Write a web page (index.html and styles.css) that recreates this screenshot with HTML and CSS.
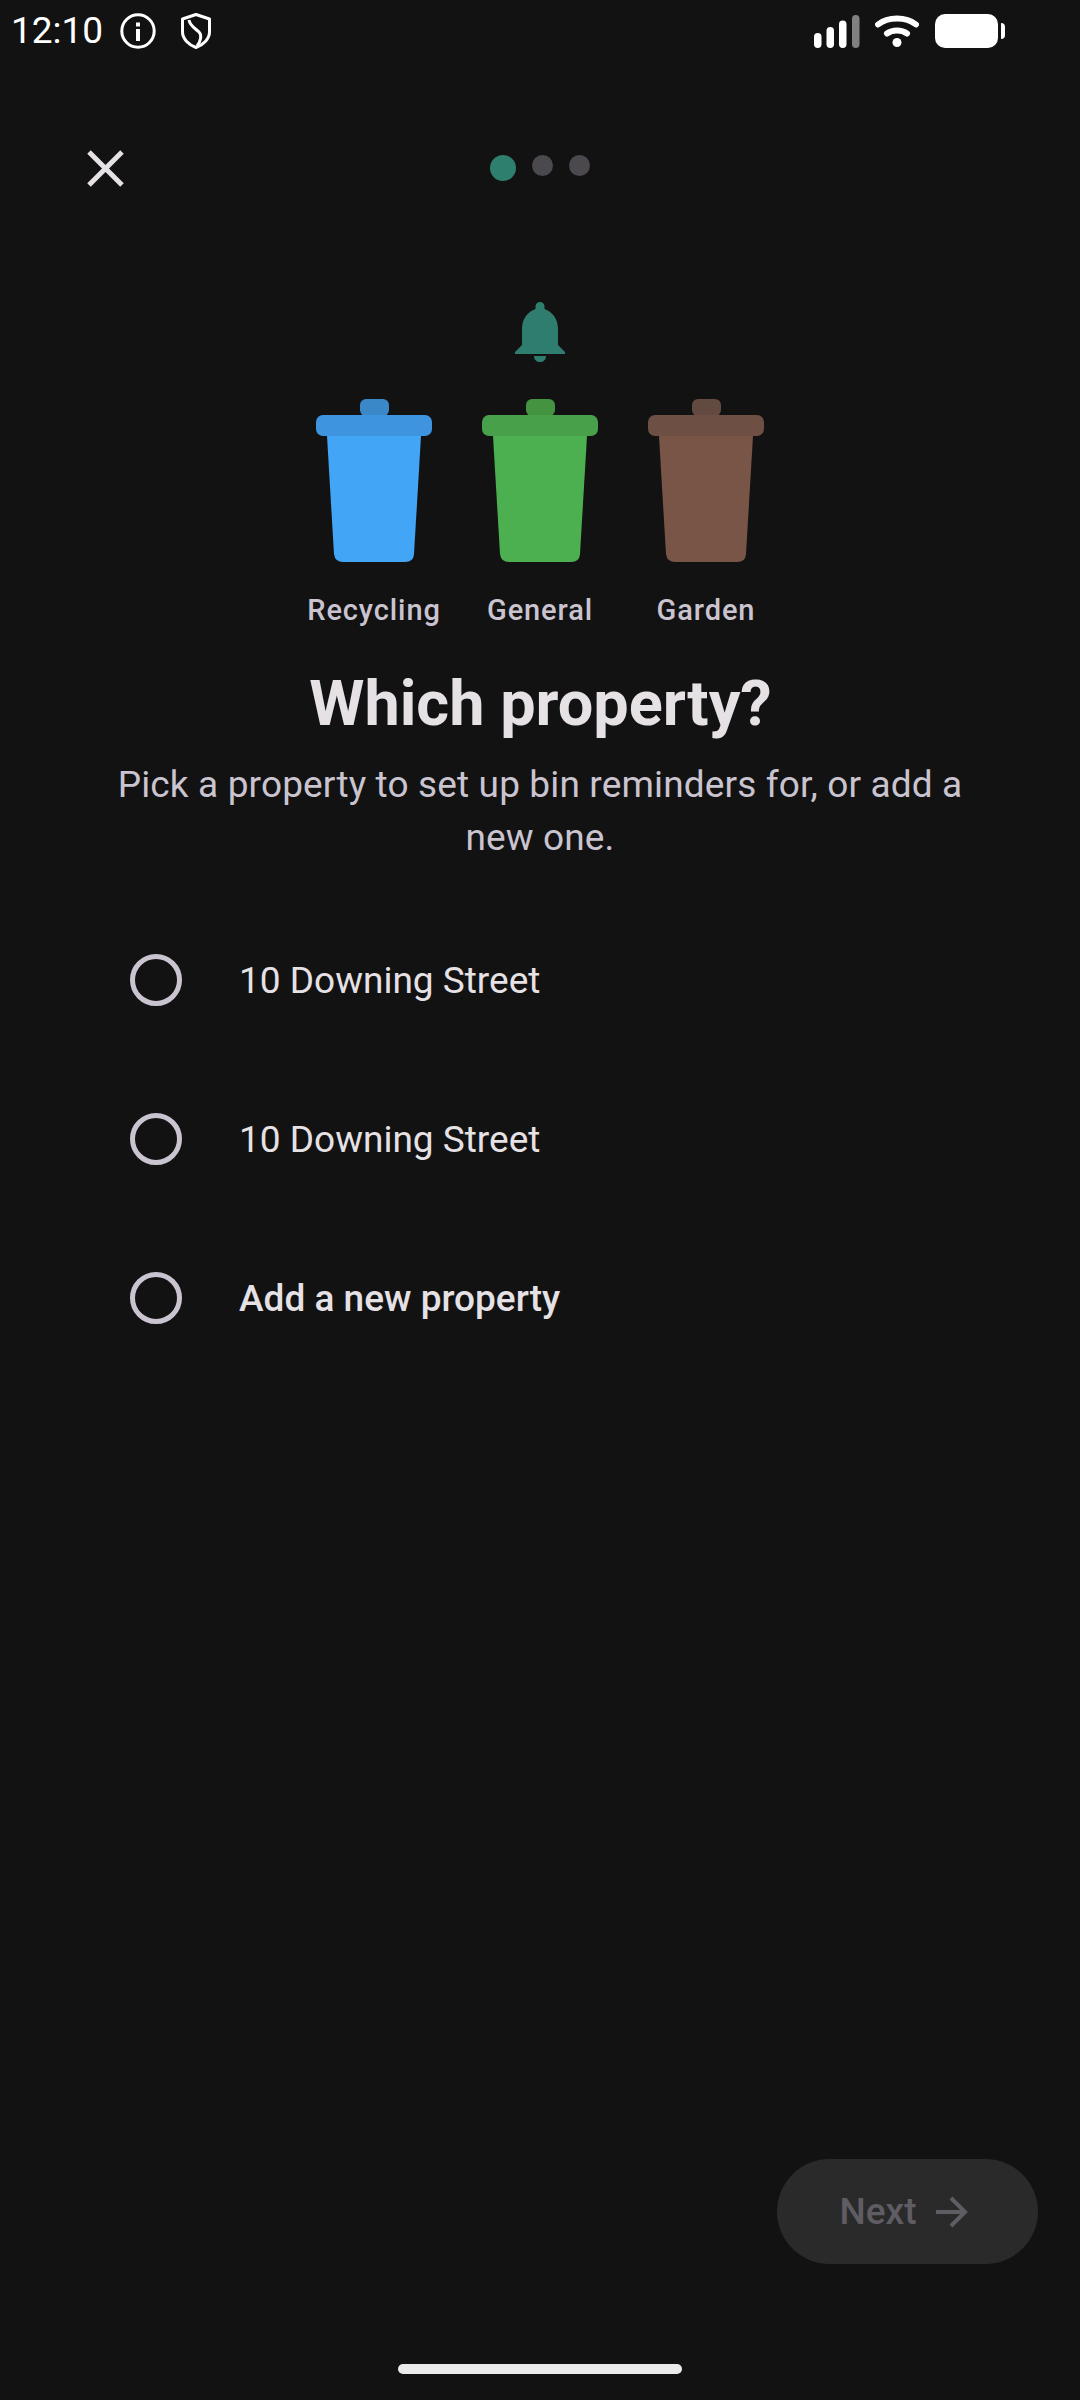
FILE: index.html
```html
<!DOCTYPE html>
<html lang="en">
<head>
    <meta charset="UTF-8">
    <meta name="viewport" content="width=device-width, initial-scale=1.0">
    <title>Which property?</title>
    <link rel="stylesheet" href="styles.css">
</head>
<body>

    <div class="status-bar">
        <span class="time">12:10</span>
        <svg class="icon-info" width="36" height="36" viewBox="0 0 36 36">
            <circle cx="18" cy="18" r="16.2" fill="none" stroke="#fff" stroke-width="3"/>
            <rect x="16" y="16" width="4" height="12" fill="#fff"/>
            <rect x="16" y="9.5" width="4" height="4" fill="#fff"/>
        </svg>
        <svg class="icon-shield" width="30" height="36" viewBox="0 0 30 36">
            <path d="M15 1.5L28.5 6V19C28.5 26 22 32 15 34.5C8 32 1.5 26 1.5 19V6Z" fill="none" stroke="#fff" stroke-width="3" stroke-linejoin="round"/>
            <path d="M8 7C9 13 14 15 18 19C21 22 20 28 16 33" fill="none" stroke="#fff" stroke-width="3"/>
        </svg>
        <div class="status-right">
            <svg width="46" height="33" viewBox="0 0 46 33">
                <rect x="0" y="18" width="7.5" height="15" rx="3.7" fill="#fff"/>
                <rect x="12.5" y="12" width="7.5" height="21" rx="3.7" fill="#fff"/>
                <rect x="25" y="5.500" width="7.5" height="27.5" rx="3.7" fill="#fff"/>
                <rect x="38" y="0" width="7.5" height="33" rx="3.7" fill="#808080"/>
            </svg>
            <svg class="icon-wifi" width="44" height="34" viewBox="0 0 44 34">
                <path d="M3 10.500C13 2.500 31 2.500 41 10.500" fill="none" stroke="#fff" stroke-width="6" stroke-linecap="round"/>
                <path d="M12 19.500C17.500 15.500 26.500 15.500 32 19.500" fill="none" stroke="#fff" stroke-width="6" stroke-linecap="round"/>
                <circle cx="22" cy="28.500" r="4.500" fill="#fff"/>
            </svg>
            <div class="battery"></div>
            <div class="battery-nub"></div>
        </div>
    </div>

    <div class="top-bar">
        <svg class="icon-close" width="37" height="37" viewBox="0 0 37 37">
            <path d="M2 2L35 35M35 2L2 35" fill="none" stroke="#e6e1e5" stroke-width="5"/>
        </svg>
        <div class="dots">
            <div class="dot active"></div>
            <div class="dot"></div>
            <div class="dot"></div>
        </div>
    </div>

    <svg class="bell" width="50" height="60" viewBox="0 0 50 60">
        <path d="M20.500 7V4.500a4.500 4.500 0 0 1 9 0V7C37 9.500 43 16.500 43 27V43L50 50V52H0V50L7 43V27C7 16.500 13 9.500 20.500 7Z" fill="#2e7d6e"/>
        <path d="M19 54H31C31 58 28 60 25 60C22 60 19 58 19 54Z" fill="#2e7d6e"/>
    </svg>

    <div class="bins">
        <div class="bin-item bin-blue">
            <svg class="bin" width="116" height="164" viewBox="0 0 116 164">
                <rect class="bin-handle" x="44" y="0" width="29" height="17" rx="6"/>
                <rect class="bin-lid" x="0" y="16" width="116" height="21" rx="7"/>
                <path class="bin-body" d="M11 37H105L98 155Q97.500 163 89 163H27Q19 163 18 155Z"/>
            </svg>
            <span class="bin-label">Recycling</span>
        </div>
        <div class="bin-item bin-green">
            <svg class="bin" width="116" height="164" viewBox="0 0 116 164">
                <rect class="bin-handle" x="44" y="0" width="29" height="17" rx="6"/>
                <rect class="bin-lid" x="0" y="16" width="116" height="21" rx="7"/>
                <path class="bin-body" d="M11 37H105L98 155Q97.500 163 89 163H27Q19 163 18 155Z"/>
            </svg>
            <span class="bin-label">General</span>
        </div>
        <div class="bin-item bin-brown">
            <svg class="bin" width="116" height="164" viewBox="0 0 116 164">
                <rect class="bin-handle" x="44" y="0" width="29" height="17" rx="6"/>
                <rect class="bin-lid" x="0" y="16" width="116" height="21" rx="7"/>
                <path class="bin-body" d="M11 37H105L98 155Q97.500 163 89 163H27Q19 163 18 155Z"/>
            </svg>
            <span class="bin-label">Garden</span>
        </div>
    </div>

    <h1>Which property?</h1>
    <p class="subtitle">Pick a property to set up bin reminders for, or add a new one.</p>

    <div class="options">
        <div class="option">
            <div class="radio"></div>
            <span>10 Downing Street</span>
        </div>
        <div class="option">
            <div class="radio"></div>
            <span>10 Downing Street</span>
        </div>
        <div class="option add-new">
            <div class="radio"></div>
            <span>Add a new property</span>
        </div>
    </div>

    <div class="footer">
        <button class="next-button" disabled>
            Next
            <svg width="32" height="32" viewBox="0 0 32 32">
                <path d="M0 16H29M15 2L29 16L15 30" fill="none" stroke="#5f5c63" stroke-width="4"/>
            </svg>
        </button>
    </div>

    <div class="home-bar"></div>

</body>
</html>
```

FILE: styles.css
```css
* {
    box-sizing: border-box;
}

body {
    margin: 0;
    width: 1080px;
    height: 2400px;
    overflow: hidden;
    display: flex;
    flex-direction: column;
    background-color: #121212;
    font-family: Roboto, sans-serif;
    color: #e6e1e5;
}

.status-bar {
    display: flex;
    align-items: center;
    height: 60px;
    padding: 2px 75px 0 11px;
    color: #fff;
}

.time {
    font-size: 37px;
    font-weight: 400;
    line-height: 60px;
}

.icon-info {
    margin-left: 17px;
}

.icon-shield {
    margin-left: 25px;
}

.status-right {
    display: flex;
    align-items: center;
    margin-left: auto;
}

.icon-wifi {
    margin-left: 15px;
}

.battery {
    width: 63px;
    height: 34px;
    margin-left: 16px;
    background-color: #fff;
    border-radius: 10px;
}

.battery-nub {
    width: 4px;
    height: 16px;
    margin-left: 3px;
    background-color: #fff;
    border-radius: 0 4px 4px 0;
}

.top-bar {
    display: flex;
    align-items: center;
    height: 60px;
    margin-top: 78px;
    padding-left: 87px;
}

.dots {
    display: flex;
    align-items: center;
    gap: 16px;
    margin-left: 366px;
}

.dot {
    width: 21px;
    height: 21px;
    margin-top: -6px;
    background-color: #4b494e;
    border-radius: 50%;
}

.dot.active {
    width: 26px;
    height: 26px;
    margin-top: 0;
    background-color: #2f7f6f;
}

.bell {
    display: block;
    align-self: center;
    margin-top: 104px;
}

.bins {
    display: flex;
    justify-content: center;
    gap: 50px;
    margin-top: 37px;
}

.bin-item {
    display: flex;
    flex-direction: column;
    align-items: center;
    width: 116px;
}

.bin {
    display: block;
}

.bin-label {
    margin-top: 30px;
    font-size: 29px;
    font-weight: 500;
    line-height: 34px;
    letter-spacing: 0.9px;
    white-space: nowrap;
    color: #cac4d0;
}

.bin-blue .bin-body { fill: #42a5f5; }
.bin-blue .bin-lid { fill: #3f94df; }
.bin-blue .bin-handle { fill: #3b88c9; }

.bin-green .bin-body { fill: #4caf50; }
.bin-green .bin-lid { fill: #48a04b; }
.bin-green .bin-handle { fill: #439341; }

.bin-brown .bin-body { fill: #795548; }
.bin-brown .bin-lid { fill: #6d4f44; }
.bin-brown .bin-handle { fill: #634a40; }

h1 {
    margin: 39px 0 0;
    padding-left: 1px;
    font-size: 63px;
    font-weight: 700;
    line-height: 76px;
    text-align: center;
}

.subtitle {
    width: 880px;
    margin: 16px auto 0;
    font-size: 37px;
    line-height: 53px;
    letter-spacing: 0.14px;
    text-align: center;
    color: #cac4d0;
}

.options {
    display: flex;
    flex-direction: column;
    gap: 53px;
    margin-top: 63px;
    padding-left: 130px;
}

.option {
    display: flex;
    align-items: center;
    gap: 57px;
    height: 106px;
    font-size: 37px;
}

.radio {
    width: 52px;
    height: 52px;
    border: 5px solid #cac4d0;
    border-radius: 50%;
}

.add-new {
    font-weight: 500;
}

.footer {
    display: flex;
    justify-content: flex-end;
    margin-top: auto;
    padding-right: 42px;
}

.next-button {
    display: flex;
    align-items: center;
    justify-content: center;
    gap: 19px;
    width: 261px;
    height: 105px;
    padding: 0 8px 0 0;
    font-family: inherit;
    font-size: 37px;
    font-weight: 500;
    color: #5f5c63;
    background-color: #2a2a2a;
    border: none;
    border-radius: 53px;
}

.home-bar {
    align-self: center;
    width: 284px;
    height: 10px;
    margin: 100px 0 26px;
    background-color: #ebebeb;
    border-radius: 5px;
}
```
